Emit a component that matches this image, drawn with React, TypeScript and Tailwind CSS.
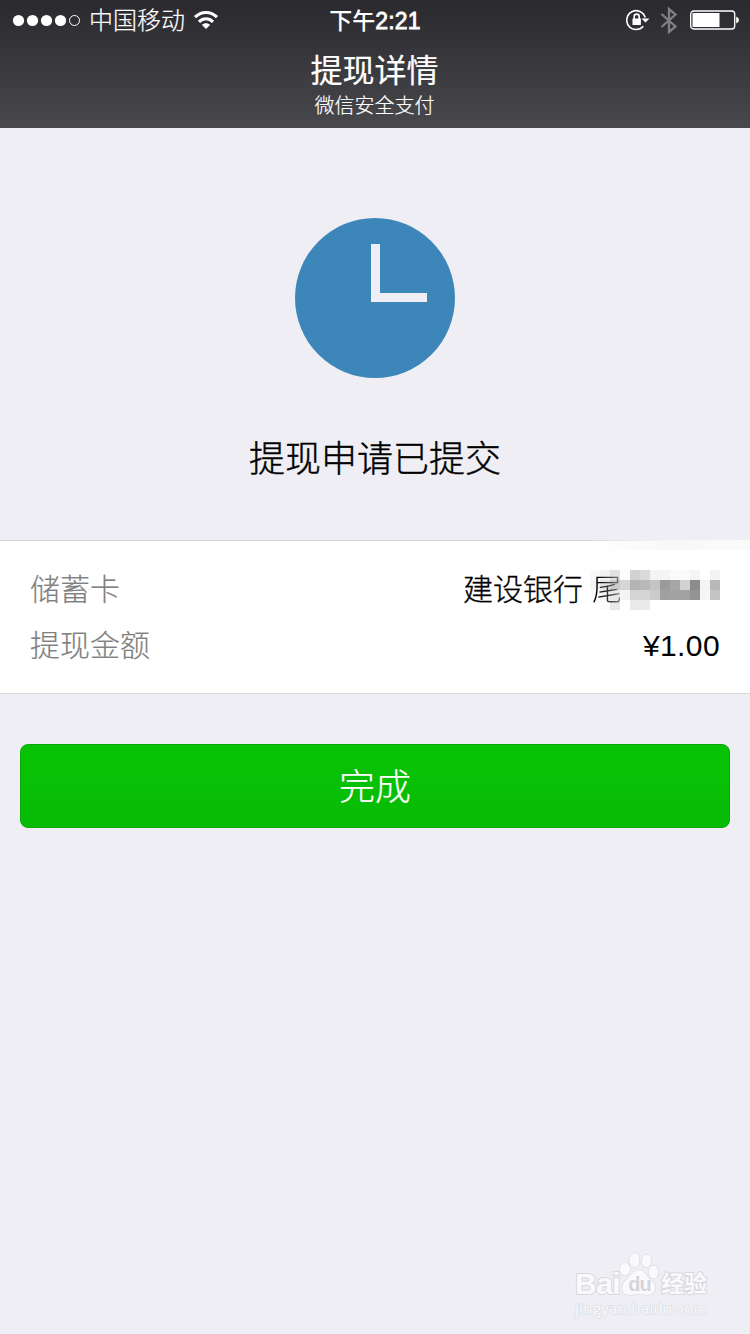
import React from 'react';

// 10px blocks that hide the card's last digits
const mosaic = [
  '#f9f9f9', '#f1f1f1', '#e2e2e2', '#fdfdfd', '#d2d2d2', '#dadada', '#f4f4f4', '#f4f4f4', '#fafafa', '#fafafa', '#f4f4f4', '#ffffff', '#f3f3f3',
  '#f5f5f5', '#e4e4e4', '#cccccc', '#d6d6d6', '#b4b4b4', '#b8b8b8', '#c4c4c4', '#9b9b9b', '#a6a6a6', '#d2d2d2', '#8c8c8c', '#f4f4f4', '#b8b8b8',
  '#fefefe', '#f4f4f4', '#e8e8e8', '#f4f4f4', '#d4d4d4', '#d4d4d4', '#cbcbcb', '#a0a0a0', '#a2a2a2', '#a2a2a2', '#949494', '#f6f6f6', '#c4c4c4',
  '#ffffff', '#fcfcfc', '#e8e8e8', '#ffffff', '#e9e9e9', '#eaeaea', '#ffffff', '#ffffff', '#ffffff', '#ffffff', '#ffffff', '#ffffff', '#ffffff',
];

const StatusBar: React.FC = () => (
  <div className="grid h-10 grid-cols-[250px_250px_250px] items-center">
    <div className="flex items-center pl-3">
      <svg width="70" height="14" viewBox="0 0 70 14" fill="#fff">
        <circle cx="6.5" cy="7.5" r="5.6" />
        <circle cx="20.5" cy="7.5" r="5.6" />
        <circle cx="34.5" cy="7.5" r="5.6" />
        <circle cx="48.5" cy="7.5" r="5.6" />
        <circle cx="62.5" cy="7.5" r="5" fill="none" stroke="#fff" strokeWidth="1" />
      </svg>
      <span className="ml-[7px] whitespace-nowrap pt-0.5 text-[24px] font-light leading-[38px] [-webkit-text-stroke:0.2px]">中国移动</span>
      <svg className="ml-2" width="26" height="20" viewBox="0 0 26 20" fill="none" stroke="#fff" strokeWidth="3.1">
        <path d="M2 7.2C8.300 .9 17.700 .9 24 7.200" />
        <path d="M6 11.800C10 7.800 16 7.800 20 11.800" />
        <path d="M8.800 14.800C11.300 12.600 14.700 12.600 17.200 14.800L13 19Z" fill="#fff" stroke="none" />
      </svg>
    </div>
    <div className="pt-0.5 text-center text-[23px] font-medium leading-[38px]">
      下午<span className="tracking-[0.2px] [-webkit-text-stroke:0.8px_#fff]">2:21</span>
    </div>
    <div className="flex items-center justify-end pr-[11px]">
      <svg width="26" height="24" viewBox="0 0 26 24" fill="none" stroke="#fff" strokeWidth="1.6">
        <path d="M18.300 18.200A9.400 9.400 0 1 1 20.200 9.500" />
        <path d="M16.500 10.400H24.500L20.500 14.500Z" fill="#fff" stroke="none" />
        <rect x="7.500" y="10.500" width="8.400" height="6.500" fill="#fff" stroke="none" />
        <path d="M9.200 11V8.600A2.500 2.500 0 0 1 14.200 8.600V11" />
      </svg>
      <svg className="ml-[9px]" width="18" height="28" viewBox="0 0 18 28" fill="none" stroke="#818184" strokeWidth="2.3">
        <path d="M1.500 8L15.500 20.500L9 26V3L15.500 8.500L1.500 21" />
      </svg>
      <svg className="ml-[11px]" width="50" height="20" viewBox="0 0 50 20">
        <rect x="1.700" y="1" width="44" height="18" rx="3" fill="none" stroke="#fff" strokeWidth="1.3" />
        <rect x="3.500" y="3" width="27" height="14" fill="#fff" />
        <path d="M47.200 6.500Q50 7.500 50 10T47.200 13.500Z" fill="#fff" />
      </svg>
    </div>
  </div>
);

const Watermark: React.FC = () => (
  <div className="flex w-[136px] flex-col text-[#fafafc]">
    <div className="flex h-[46px] items-end [-webkit-text-stroke:2px_#d8d8dd] [paint-order:stroke_fill]">
      <span className="font-['Liberation_Sans',sans-serif] text-[30px] font-bold leading-[29px] tracking-[-0.5px]">Bai</span>
      <div className="relative -ml-px h-[46px] w-[40px]">
        <svg className="block" width="40" height="46" viewBox="0 0 40 46" fill="#fafafc" stroke="#d8d8dd" strokeWidth="1.2">
          <ellipse cx="6" cy="17" rx="5" ry="6.500" />
          <ellipse cx="15.500" cy="8" rx="5" ry="7" />
          <ellipse cx="27.500" cy="9" rx="5" ry="6.500" />
          <ellipse cx="34.500" cy="20" rx="5" ry="6.500" />
          <path d="M20 18C15 18 12 23 8 27C1 33 2 43 10 43C14 43 16 42 20 42C25 42 27 44 32 42C39 39 37 32 31 27C27 23 25 18 20 18Z" />
        </svg>
        <span className="absolute left-[9px] top-[21px] font-['Liberation_Sans',sans-serif] text-[20px] font-bold leading-[22px] tracking-[-1px] text-[#d4d4d9] [-webkit-text-stroke:0]">du</span>
      </div>
      <span className="ml-0.5 whitespace-nowrap text-[23px] font-bold leading-[28px]">经验</span>
    </div>
    <span className="font-['Open_Sans',sans-serif] text-[15px] font-medium leading-[20px] tracking-[0.3px] [-webkit-text-stroke:1.5px_#dedee3] [paint-order:stroke_fill]">jingyan.baidu.com</span>
  </div>
);

const App: React.FC = () => {
  return (
    <div className="flex h-[1334px] w-[750px] flex-col overflow-hidden bg-[#efeef4] font-['Liberation_Sans','Noto_Sans_CJK_SC',sans-serif]">
      <header className="h-32 bg-linear-to-b from-[#2a292e] to-[#49484d] text-white">
        <StatusBar />
        <h1 className="mt-[9px] pr-px text-center text-[32px] leading-[44px] [-webkit-text-stroke:0.2px]">提现详情</h1>
        <p className="pr-px text-center text-[20px] font-light leading-[26px] [-webkit-text-stroke:0.2px]">微信安全支付</p>
      </header>

      <section className="flex h-[412px] flex-col items-center pt-[90px]">
        <svg width="160" height="160" viewBox="0 0 160 160">
          <circle cx="80" cy="80" r="80" fill="#3d86ba" />
          <path d="M76 26h9v49h47v9H76Z" fill="#efeef4" />
        </svg>
        <h2 className="mt-[55px] text-[36px] font-light leading-[54px] text-black [-webkit-text-stroke:0.4px]">提现申请已提交</h2>
      </section>

      {/* Details */}
      <section className="relative h-[154px] border-y border-[#d9d9d9] bg-white px-[30px] pt-[21px] text-[30px] font-light leading-[56px]">
        <div className="absolute -top-px right-0 h-[10px] w-[160px] bg-linear-to-r from-transparent via-[#f8f8f8] to-[#fbfbfb]" />
        <div className="flex h-14 justify-between">
          <span className="text-[#808080] [-webkit-text-stroke:0.2px]">储蓄卡</span>
          <div className="flex items-center text-black">
            <span className="[-webkit-text-stroke:0.3px]">建设银行</span>
            <div className="relative ml-[7px]">
              <div className="grid grid-cols-[repeat(13,10px)] grid-rows-[repeat(4,10px)]">
                {mosaic.map((color, i) => (
                  <div key={i} style={{ backgroundColor: color }} />
                ))}
              </div>
              <span className="absolute -top-2 left-[2px] bg-linear-to-r from-black to-[#888] bg-clip-text text-transparent">尾</span>
            </div>
          </div>
        </div>
        <div className="flex h-14 justify-between">
          <span className="text-[#808080] [-webkit-text-stroke:0.2px]">提现金额</span>
          <span className="tracking-[0.4px] text-black">¥1.00</span>
        </div>
      </section>

      <button className="mx-5 mt-[50px] h-[84px] shrink-0 rounded-lg border border-[#0aa60a] bg-linear-to-b from-[#08c305] to-[#08bc05] pt-[3px] text-[36px] font-light text-white [-webkit-text-stroke:0.2px]">
        完成
      </button>

      <footer className="mt-auto flex justify-end pb-4 pr-[39px]">
        <Watermark />
      </footer>
    </div>
  );
};

export default App;
